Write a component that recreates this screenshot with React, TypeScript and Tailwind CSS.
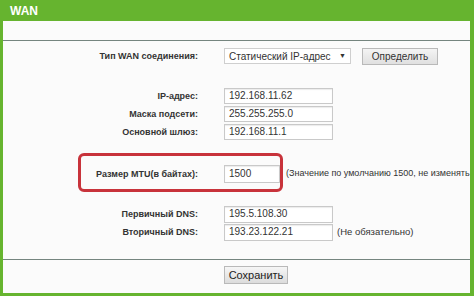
const labelCls =
  "w-[195px] shrink-0 text-right text-[9px] font-bold text-[#333] leading-none";
const inputCls =
  "h-[16px] border border-[#c9c9c9] bg-white px-[4px] text-[10px] text-[#333] leading-[14px] shadow-[inset_0_1px_1px_rgba(0,0,0,0.08)]";

function Row({
  label,
  children,
  className = "",
}: {
  label: string;
  children: React.ReactNode;
  className?: string;
}) {
  return (
    <div className={`flex h-[18px] items-center ${className}`}>
      <div className={labelCls}>{label}</div>
      <div className="ml-[26px] flex items-center whitespace-nowrap">{children}</div>
    </div>
  );
}

export default function App() {
  return (
    <div
      className="flex h-[296px] w-[474px] flex-col overflow-hidden bg-[#66b42f]"
      style={{ fontFamily: '"Liberation Sans", Arial, sans-serif' }}
    >
      {/* Header */}
      <div className="flex h-[21px] shrink-0 items-center pl-[10px] text-[12px] font-bold text-white">
        WAN
      </div>

      <div className="ml-[3px] mr-[4px] flex flex-1 flex-col bg-[#fbfbfb]">
        {/* empty top bar */}
        <div className="h-[20px] shrink-0 border-b-[1.5px] border-[#75857f]" />

        {/* Form */}
        <div className="h-[219px] shrink-0 overflow-hidden border-b-[1.5px] border-[#75857f]">
          <Row label="Тип WAN соединения:" className="mt-[6px]">
            <div className="flex h-[16px] w-[127px] items-center justify-between border border-[#cfcfcf] bg-white pl-[4px] pr-[4px] text-[10px] text-[#333]">
              <span>Статический IP-адрес</span>
              <span className="text-[7px]">▼</span>
            </div>
            <button className="ml-[11px] h-[17px] w-[76px] border border-[#b9b9b9] bg-gradient-to-b from-[#f4f4f4] to-[#e0e0e0] text-[10px] text-[#333]">
              Определить
            </button>
          </Row>

          <Row label="IP-адрес:" className="mt-[22px]">
            <div className={`${inputCls} w-[109px]`}>192.168.11.62</div>
          </Row>
          <Row label="Маска подсети:">
            <div className={`${inputCls} w-[109px]`}>255.255.255.0</div>
          </Row>
          <Row label="Основной шлюз:">
            <div className={`${inputCls} w-[109px]`}>192.168.11.1</div>
          </Row>

          <div className="relative mt-[24px]">
            <Row label="Размер MTU(в байтах):">
              <div className={`${inputCls} h-[18px] w-[56px] leading-[16px]`}>1500</div>
              <span className="ml-[6px] text-[9px] text-[#333]">
                (Значение по умолчанию 1500, не изменять
              </span>
            </Row>
            {/* highlight annotation */}
            <div className="pointer-events-none absolute left-[75px] top-[-12px] h-[39px] w-[205px] rounded-[6px] border-[3px] border-[#c8333b]" />
          </div>

          <Row label="Первичный DNS:" className="mt-[22px]">
            <div className={`${inputCls} h-[17px] w-[109px]`}>195.5.108.30</div>
          </Row>
          <Row label="Вторичный DNS:">
            <div className={`${inputCls} h-[17px] w-[109px]`}>193.23.122.21</div>
            <span className="ml-[4px] text-[9.5px] text-[#333]">(Не обязательно)</span>
          </Row>
        </div>

        {/* Footer */}
        <div className="flex flex-1 items-start pl-[221px] pt-[6px]">
          <button className="h-[18px] w-[64px] border border-[#b9b9b9] bg-gradient-to-b from-[#f6f6f6] to-[#dcdcdc] text-[11px] text-[#222]">
            Сохранить
          </button>
        </div>
      </div>
      <div className="h-[3px] shrink-0" />
    </div>
  );
}
